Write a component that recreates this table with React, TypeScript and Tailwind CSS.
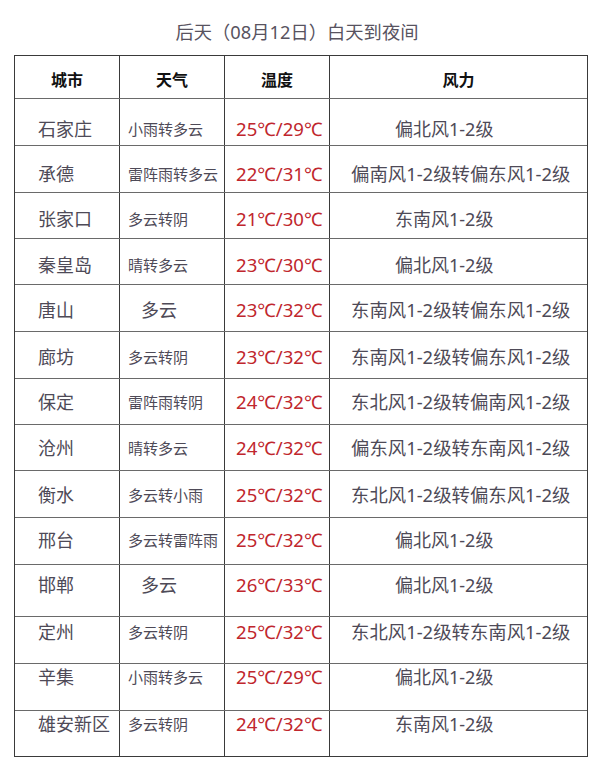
import React from "react";

type Row = {
  city: string;
  weather: string;
  big?: boolean;
  temp: string;
  wind: string;
  h: string;
  pt: string;
};

const rows: Row[] = [
  { city: "石家庄", weather: "小雨转多云", temp: "25℃/29℃", wind: "偏北风1-2级", h: "h-[47px]", pt: "pt-[18px]" },
  { city: "承德", weather: "雷阵雨转多云", temp: "22℃/31℃", wind: "偏南风1-2级转偏东风1-2级", h: "h-[47px]", pt: "pt-[16px]" },
  { city: "张家口", weather: "多云转阴", temp: "21℃/30℃", wind: "东南风1-2级", h: "h-[46px]", pt: "pt-[14px]" },
  { city: "秦皇岛", weather: "晴转多云", temp: "23℃/30℃", wind: "偏北风1-2级", h: "h-[46px]", pt: "pt-[14px]" },
  { city: "唐山", weather: "多云", big: true, temp: "23℃/32℃", wind: "东南风1-2级转偏东风1-2级", h: "h-[47px]", pt: "pt-[13px]" },
  { city: "廊坊", weather: "多云转阴", temp: "23℃/32℃", wind: "东南风1-2级转偏东风1-2级", h: "h-[47px]", pt: "pt-[13px]" },
  { city: "保定", weather: "雷阵雨转阴", temp: "24℃/32℃", wind: "东北风1-2级转偏南风1-2级", h: "h-[46px]", pt: "pt-[11px]" },
  { city: "沧州", weather: "晴转多云", temp: "24℃/32℃", wind: "偏东风1-2级转东南风1-2级", h: "h-[46px]", pt: "pt-[11px]" },
  { city: "衡水", weather: "多云转小雨", temp: "25℃/32℃", wind: "东北风1-2级转偏东风1-2级", h: "h-[47px]", pt: "pt-[12px]" },
  { city: "邢台", weather: "多云转雷阵雨", temp: "25℃/32℃", wind: "偏北风1-2级", h: "h-[47px]", pt: "pt-[10px]" },
  { city: "邯郸", weather: "多云", big: true, temp: "26℃/33℃", wind: "偏北风1-2级", h: "h-[52px]", pt: "pt-[8px]" },
  { city: "定州", weather: "多云转阴", temp: "25℃/32℃", wind: "东北风1-2级转东南风1-2级", h: "h-[47px]", pt: "pt-[3px]" },
  { city: "辛集", weather: "小雨转多云", temp: "25℃/29℃", wind: "偏北风1-2级", h: "h-[47px]", pt: "pt-[1px]" },
  { city: "雄安新区", weather: "多云转阴", temp: "24℃/32℃", wind: "东南风1-2级", h: "h-[46px]", pt: "pt-[1px]" },
];

const font = "font-['Noto_Sans','Noto_Sans_CJK_SC',sans-serif]";

export default function App() {
  return (
    <div className={`w-[600px] h-[775px] bg-white ${font} overflow-hidden`}>
      {/* Title */}
      <div className="pt-[20px] pr-[6px] text-center text-[18.3px] leading-[24px] text-[#58535f]">
        后天（08月12日）白天到夜间
      </div>

      {/* Table */}
      <div className="mt-[11px] ml-[14px] w-[574px] border border-[#3a3a3a]">
        {/* Header */}
        <div className="grid grid-cols-[105px_105px_105px_257px] h-[42px] text-[16px] font-bold text-[#111]">
          <div className="border-r border-[#3a3a3a] flex items-center justify-center pt-[5px]">城市</div>
          <div className="border-r border-[#3a3a3a] flex items-center justify-center pt-[5px]">天气</div>
          <div className="border-r border-[#3a3a3a] flex items-center justify-center pt-[5px]">温度</div>
          <div className="flex items-center justify-center pt-[5px]">风力</div>
        </div>

        {rows.map((r) => {
          const long = r.wind.length > 8;
          return (
            <div
              key={r.city}
              className={`grid grid-cols-[105px_105px_105px_257px] border-t border-[#6a6a6a] ${r.h} leading-[24px] text-[#4e4a57]`}
            >
              <div className={`border-r border-[#3a3a3a] pl-[23px] text-[18px] whitespace-nowrap ${r.pt}`}>
                {r.city}
              </div>
              <div
                className={`border-r border-[#3a3a3a] whitespace-nowrap ${r.pt} ${
                  r.big ? "pl-[21px] text-[18px]" : "pl-[8px] text-[15px]"
                }`}
              >
                {r.weather}
              </div>
              <div className={`border-r border-[#3a3a3a] pl-[11px] text-[18.6px] text-[#c0262d] whitespace-nowrap ${r.pt}`}>
                {r.temp}
              </div>
              <div
                className={`whitespace-nowrap ${r.pt} ${
                  long ? "pl-[21px] text-[18.4px]" : "pl-[65px] text-[18px]"
                }`}
              >
                {r.wind}
              </div>
            </div>
          );
        })}
      </div>
    </div>
  );
}
